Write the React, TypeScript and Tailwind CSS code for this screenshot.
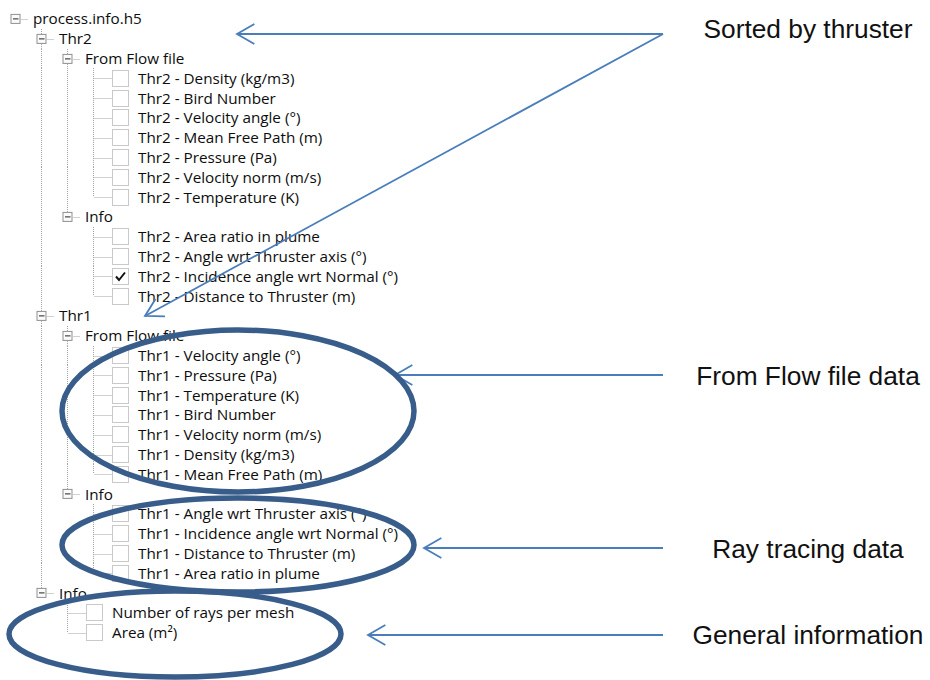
import React from 'react';

interface Node {
  label: string;
  checked?: boolean;
  children?: Node[];
}

interface Row {
  label: string;
  level: number;
  checked: boolean;
  leaf: boolean;
  hasNext: boolean;
  guides: boolean[]; // for each ancestor column, does the line continue through this row
}

const thr = (n: string, items: string[]) => items.map((s) => ({ label: `${n} - ${s}` }));

const tree: Node = {
  label: 'process.info.h5',
  children: [
    {
      label: 'Thr2',
      children: [
        {
          label: 'From Flow file',
          children: thr('Thr2', [
            'Density (kg/m3)',
            'Bird Number',
            'Velocity angle (°)',
            'Mean Free Path (m)',
            'Pressure (Pa)',
            'Velocity norm (m/s)',
            'Temperature (K)',
          ]),
        },
        {
          label: 'Info',
          children: [
            { label: 'Thr2 - Area ratio in plume' },
            { label: 'Thr2 - Angle wrt Thruster axis (°)' },
            { label: 'Thr2 - Incidence angle wrt Normal (°)', checked: true },
            { label: 'Thr2 - Distance to Thruster (m)' },
          ],
        },
      ],
    },
    {
      label: 'Thr1',
      children: [
        {
          label: 'From Flow file',
          children: thr('Thr1', [
            'Velocity angle (°)',
            'Pressure (Pa)',
            'Temperature (K)',
            'Bird Number',
            'Velocity norm (m/s)',
            'Density (kg/m3)',
            'Mean Free Path (m)',
          ]),
        },
        {
          label: 'Info',
          children: thr('Thr1', [
            'Angle wrt Thruster axis (°)',
            'Incidence angle wrt Normal (°)',
            'Distance to Thruster (m)',
            'Area ratio in plume',
          ]),
        },
      ],
    },
    {
      label: 'Info',
      children: [{ label: 'Number of rays per mesh' }, { label: 'Area (m²)' }],
    },
  ],
};

function flatten(node: Node, level: number, hasNext: boolean, guides: boolean[], out: Row[]) {
  out.push({
    label: node.label,
    level,
    checked: !!node.checked,
    leaf: !node.children,
    hasNext,
    guides,
  });
  const kids = node.children || [];
  kids.forEach((k, i) => flatten(k, level + 1, i < kids.length - 1, [...guides, hasNext && level > 0], out));
  return out;
}

const rows = flatten(tree, 0, false, [], []);

const ROW_H = 19.8;
const DOT = '#a3a3a3';

function TreeRow({ row }: { row: Row }) {
  const c = 15.5 + 26 * row.level;
  const mid = ROW_H / 2;
  const w = row.leaf ? 26 * row.level + 34 : 26 * row.level + 28;
  return (
    <div className="flex items-center h-[19.8px]">
      <svg width={w} height={ROW_H} className="shrink-0">
        {row.guides.map((on, k) =>
          on ? <line key={k} x1={15.5 + 26 * k} y1={0} x2={15.5 + 26 * k} y2={ROW_H} stroke={DOT} strokeDasharray="1 1" /> : null
        )}
        {row.level > 0 && <line x1={c} y1={0} x2={c} y2={row.leaf ? mid : mid - 4} stroke={DOT} strokeDasharray="1 1" />}
        {row.hasNext && <line x1={c} y1={row.leaf ? mid : mid + 5} x2={c} y2={ROW_H} stroke={DOT} strokeDasharray="1 1" />}
        <line x1={row.leaf ? c + 1 : c + 6} y1={Math.round(mid) + 0.5} x2={w} y2={Math.round(mid) + 0.5} stroke={DOT} strokeDasharray="1 1" />
        {!row.leaf && (
          <g>
            <rect x={c - 4.5} y={mid - 4.5} width={9} height={9} fill="#fbfbfb" stroke="#8e8f8f" />
            <line x1={c - 2.5} y1={mid} x2={c + 3} y2={mid} stroke="#222" />
          </g>
        )}
      </svg>
      {row.leaf ? (
        <>
          <div className="w-[17px] h-[17px] shrink-0 border border-[#c9c9c9] bg-white">
            {row.checked && (
              <svg width="15" height="15" viewBox="0 0 15 15">
                <path d="M3 7.5 L6 11 L12 3.5" fill="none" stroke="#111" strokeWidth="2" />
              </svg>
            )}
          </div>
          <span className="ml-[9px] whitespace-nowrap">{row.label}</span>
        </>
      ) : (
        <span className="ml-[5px] whitespace-nowrap">{row.label}</span>
      )}
    </div>
  );
}

function Arrow({ x1, y1, x2, y2 }: { x1: number; y1: number; x2: number; y2: number }) {
  // open arrowhead at (x2, y2)
  const a = Math.atan2(y1 - y2, x1 - x2);
  const len = 20;
  const spread = 0.52;
  const p1 = [x2 + len * Math.cos(a + spread), y2 + len * Math.sin(a + spread)];
  const p2 = [x2 + len * Math.cos(a - spread), y2 + len * Math.sin(a - spread)];
  return (
    <g stroke="#4a7ebb" strokeWidth={1.8} fill="none">
      <line x1={x1} y1={y1} x2={x2} y2={y2} />
      <polyline points={`${p1[0]},${p1[1]} ${x2},${y2} ${p2[0]},${p2[1]}`} />
    </g>
  );
}

export default function App() {
  return (
    <div className="relative w-[930px] h-[680px] bg-white overflow-hidden">
      <div className="flex">
        <div className="w-[440px] pt-[9px] font-['Open_Sans',sans-serif] text-[15.25px] text-[#0d0d0d]">
          {rows.map((r, i) => (
            <TreeRow key={i} row={r} />
          ))}
        </div>
        <div className="ml-auto mr-[2px] w-[240px] pt-[14px] font-['Liberation_Sans',Arial,sans-serif] text-[26.3px] text-[#111] text-center">
          <div className="h-[30px] leading-[30px]">Sorted by thruster</div>
          <div className="h-[30px] leading-[30px] mt-[317px]">From Flow file data</div>
          <div className="h-[30px] leading-[30px] mt-[143px]">Ray tracing data</div>
          <div className="h-[30px] leading-[30px] mt-[56px]">General information</div>
        </div>
      </div>

      <svg className="absolute inset-0 pointer-events-none" width="930" height="680">
        <Arrow x1={663} y1={34} x2={237} y2={34} />
        <Arrow x1={663} y1={34} x2={145} y2={316} />
        <Arrow x1={663} y1={375} x2={395} y2={375} />
        <Arrow x1={663} y1={548} x2={424} y2={548} />
        <Arrow x1={663} y1={635} x2={368} y2={635} />
        <g fill="none" stroke="#385d8a" strokeWidth={5.5}>
          <ellipse cx={238} cy={411} rx={176} ry={81} />
          <ellipse cx={238} cy={545} rx={176} ry={47} />
          <ellipse cx={175} cy={634} rx={166} ry={43} />
        </g>
      </svg>
    </div>
  );
}
